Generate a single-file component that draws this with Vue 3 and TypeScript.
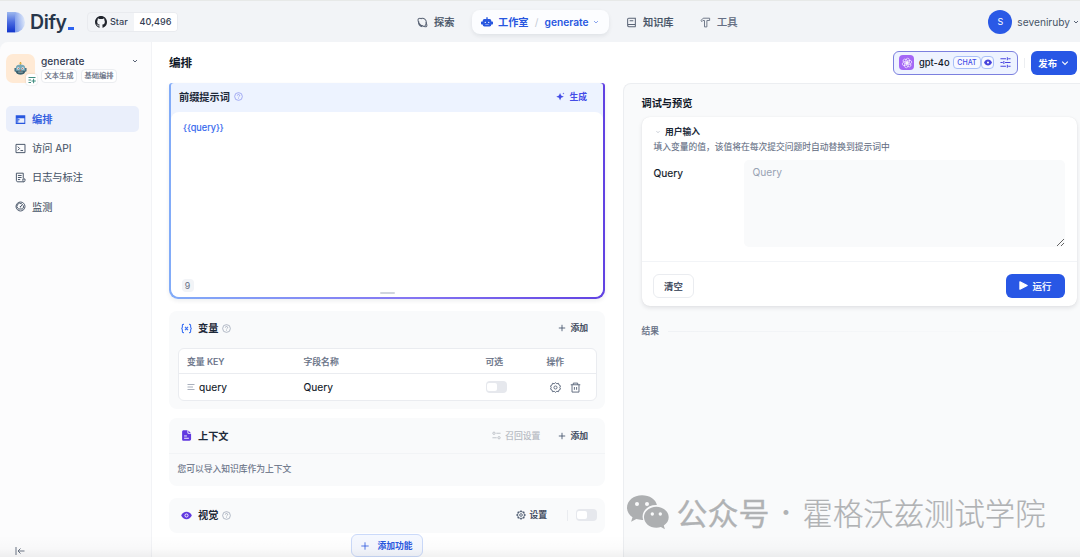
<script setup lang="ts">
import { ref } from 'vue'

interface MenuItem {
  key: string
  label: string
}

const menu: MenuItem[] = [
  { key: 'arrange', label: '编排' },
  { key: 'api', label: '访问 API' },
  { key: 'logs', label: '日志与标注' },
  { key: 'monitor', label: '监测' },
]
const active = ref<string>('arrange')
const prompt = ref<string>('{{query}}')
const query = ref<string>('')
const gearTeeth: number[] = [0, 45, 90, 135, 180, 225, 270, 315]
const petals: number[] = [0, 60, 120, 180, 240, 300]
</script>

<template>
  <div class="page">
    <header class="topbar">
      <div class="brand">
        <svg class="mark" viewBox="0 0 19 21">
          <defs>
            <linearGradient id="markStem" x1="0" y1="0" x2="0" y2="1">
              <stop offset="0" stop-color="#9db8ee" />
              <stop offset="0.5" stop-color="#4a6be0" />
              <stop offset="1" stop-color="#1033cc" />
            </linearGradient>
            <linearGradient id="markBowl" x1="0" y1="0.6" x2="1" y2="0.3">
              <stop offset="0" stop-color="#7d9ceb" />
              <stop offset="1" stop-color="#e2ebfa" />
            </linearGradient>
          </defs>
          <path d="M7.800 0a10.200 10.200 0 0 1 0 20.400z" fill="url(#markBowl)" />
          <path d="M0 0h8v20.400H0z" fill="url(#markStem)" />
        </svg>
        <span class="brand-name">Dify</span><i class="brand-bar"></i>
      </div>
      <div class="github">
        <span class="gh-left">
          <svg class="gh-icon" viewBox="0 0 16 16"><path fill="#20242c" d="M8 0C3.580 0 0 3.580 0 8c0 3.540 2.290 6.530 5.470 7.590.4.070.550-.170.550-.380 0-.190-.010-.820-.010-1.490-2.010.370-2.530-.490-2.690-.940-.090-.230-.480-.940-.820-1.130-.280-.150-.680-.520-.010-.530.630-.010 1.080.580 1.230.820.720 1.210 1.870.870 2.330.660.070-.520.280-.870.510-1.070-1.780-.2-3.640-.890-3.640-3.950 0-.870.310-1.590.820-2.150-.080-.2-.360-1.020.080-2.120 0 0 .670-.210 2.200.820a7.500 7.500 0 0 1 4 0c1.530-1.040 2.200-.820 2.200-.820.440 1.100.160 1.920.080 2.120.510.560.820 1.270.820 2.150 0 3.070-1.870 3.750-3.650 3.950.290.250.540.730.540 1.480 0 1.070-.010 1.930-.010 2.200 0 .210.150.460.550.380A8 8 0 0 0 16 8c0-4.420-3.580-8-8-8z" /></svg>
          Star
        </span>
        <span class="gh-count">40,496</span>
      </div>
      <nav class="nav">
        <a class="nav-item explore">
          <svg viewBox="0 0 12 12" fill="none" stroke="#596375" stroke-width="1.100" stroke-linejoin="round"><path d="M2.500 7.200C1 4.600 1 2.300 1.800 1.700c.8-.6 2.200-.4 3.400.2M9.600 5.600c1.300 2.300 1.500 4 .8 4.700-.7.700-2.800.3-5-1" /><path d="M4.500 1.700A4.300 4.300 0 0 1 10.200 6c0 1.600-.7 2.900-1.800 3.700M2 4.500a4.300 4.300 0 0 0 3.700 6M2.300 6.800c.8 1.300 2 2.400 3.600 3.300" /></svg>
          探索
        </a>
        <a class="nav-pill">
          <svg viewBox="0 0 14 12" fill="#2857df"><path d="M6.200 0h1.600v2H10a2 2 0 0 1 2 2v.8h1.200c.5 0 .8.300.8.700v2c0 .4-.3.700-.8.700H12v.5a2 2 0 0 1-2 2H4a2 2 0 0 1-2-2v-.5H.8c-.5 0-.8-.3-.8-.7v-2c0-.4.3-.7.8-.7H2V4a2 2 0 0 1 2-2h2.200z" /><circle cx="5" cy="5.800" r=".8" fill="#fff" /><circle cx="9" cy="5.800" r=".8" fill="#fff" /><path d="M5 8.300h4" stroke="#fff" stroke-width=".5" /></svg>
          <b>工作室</b><i class="slash">/</i><b class="app-name">generate</b>
          <svg class="chev" viewBox="0 0 8 8" fill="none" stroke="#8ba5ee"><path d="M2 3l2 2 2-2" /></svg>
        </a>
        <a class="nav-item books">
          <svg viewBox="0 0 12 12" fill="none" stroke="#596375" stroke-width="1.100"><path d="M10.200 8.200V1.300H3a1.200 1.200 0 0 0-1.200 1.200v6.900c0 .8.500 1.300 1.200 1.300h7.400M1.800 9.200c0-.6.500-1 1.200-1h7.200v2.500M4 4h4" /></svg>
          知识库
        </a>
        <a class="nav-item tools">
          <svg viewBox="0 0 12 12" fill="none" stroke="#6b7585" stroke-width="1.050" stroke-linejoin="round"><path d="M1 3.900L3.500 1.300h7v2.500h-3v7H4.900v-7H3.200L2.200 5z" /></svg>
          工具
        </a>
      </nav>
      <div class="account">
        <span class="avatar">S</span>
        <span>seveniruby</span>
        <svg class="chev" viewBox="0 0 8 8" fill="none" stroke="#596375" stroke-width="1"><path d="M2 3l2 2 2-2" /></svg>
      </div>
    </header>

    <div class="body">
      <aside class="sidebar">
        <div class="app">
          <div class="app-icon">
            <svg class="robot" viewBox="0 0 14 14">
              <path d="M7 0v3" stroke="#94782d" stroke-width=".9" /><circle cx="7" cy="1.400" r="1.200" fill="#e6b540" />
              <path d="M.5 6.500h2v4h-1a1 1 0 0 1-1-1zM13.500 6.500h-2v4h1a1 1 0 0 0 1-1z" fill="#416c80" />
              <path d="M2 6.300C2 4 4 2.800 7 2.800s5 1.200 5 3.500v4C12 12.600 10 13.500 7 13.500s-5-.9-5-3.200z" fill="#78a8b7" />
              <path d="M2 9.500h10c0 3-2 4-5 4s-5-1-5-4z" fill="#3d5f6c" />
              <circle cx="4.600" cy="6.900" r="1.300" fill="#e8efed" /><circle cx="9.400" cy="6.900" r="1.300" fill="#e8efed" />
              <circle cx="4.700" cy="7" r=".6" fill="#c14c3e" /><circle cx="9.300" cy="7" r=".6" fill="#c14c3e" />
              <path d="M7 7.800l.8 1.500H6.200z" fill="#c25a4b" /><path d="M4.500 10.900h5" stroke="#b9c9c9" stroke-width=".8" />
            </svg>
            <span class="app-badge">
              <svg viewBox="0 0 8 8" stroke="#2b8173" fill="none" stroke-width=".9"><path d="M.5 1.500h7M.5 4h2.500M.5 6.500h2.500M5.600 2.800v4.400M3.500 5h4.300" /></svg>
            </span>
          </div>
          <div class="app-info">
            <div class="app-title">generate</div>
            <div class="tags"><span>文本生成</span><span>基础编排</span></div>
          </div>
          <svg class="chev app-chev" viewBox="0 0 8 8" fill="none" stroke="#596375"><path d="M2 3l2 2 2-2" /></svg>
        </div>
        <div class="menu">
          <a v-for="m in menu" :key="m.key" :class="{ on: active === m.key }" @click="active = m.key">
            <svg viewBox="0 0 12 12" fill="none" stroke="currentColor" stroke-width="1.050">
              <template v-if="m.key === 'arrange'"><path fill="currentColor" stroke="none" fill-rule="evenodd" d="M.8 1.300h10.400v9.500H.8zM2 4.600v5h8.200v-5z" /><path d="M3 4.500v5M3 6.300h2" /></template>
              <template v-else-if="m.key === 'api'"><path d="M1.100 1.500h9.800v9H1.100zM3 4l2 2-2 2M6 8.200h2.800" /></template>
              <template v-else-if="m.key === 'logs'"><path d="M9 7V1.300H1.500v7.800c0 1 .6 1.600 1.500 1.600h6.400a1.500 1.500 0 0 0 1.500-1.500V7.600H8.600v1.600c0 .8.200 1.500.8 1.500M3.200 3.800h4M3.200 6h4M3.200 8.200h2.500" /></template>
              <template v-else><circle cx="6" cy="6" r="4.900" /><path d="M3.300 8.200A3.200 3.200 0 0 1 7.500 3.200M8.900 4.700a3.200 3.200 0 0 1-.2 3.500M8.500 3.500L6 6.200" /><path d="M3.300 8.700h5.400" /><circle cx="6" cy="6.300" r=".8" fill="currentColor" stroke="none" /></template>
            </svg>
            {{ m.label }}
          </a>
        </div>
        <svg class="collapse" viewBox="0 0 10 10" fill="none" stroke="#6b7585"><path d="M1 1v8M3 5h6.500M5.500 2.500L3 5l2.500 2.500" /></svg>
      </aside>

      <main class="main">
        <div class="main-head">
          <h1>编排</h1>
          <div class="actions">
            <div class="model">
              <span class="model-icon">
                <svg viewBox="0 0 12 12" fill="none" stroke="#fff" stroke-width=".6"><ellipse v-for="a in petals" :key="a" cx="6.700" cy="3.900" rx="1.900" ry="2.700" :transform="`rotate(${a} 6 6)`" /></svg>
              </span>
              <b>gpt-4o</b>
              <span class="chat">CHAT</span>
              <span class="vision-tag"><svg viewBox="0 0 10 8"><path d="M0 4c2-5 8-5 10 0-2 5-8 5-10 0z" fill="#4743db" /><circle cx="5" cy="4" r="1.300" fill="#fff" /></svg></span>
              <svg class="sliders" viewBox="0 0 12 12" fill="none" stroke="#4945df" stroke-width="1.100"><path d="M.5 2h6M9 2h2.500M8 .4v3.200M.5 6H3M5.500 6h6M4.200 4.300v3.400M.5 10h6M9 10h2.500M8 8.400v3.200" /></svg>
            </div>
            <i class="sep"></i>
            <button class="publish">发布<svg class="chev" viewBox="0 0 8 8" fill="none" stroke="#fff" stroke-width="1.100"><path d="M1.200 2.700L4 5.400l2.800-2.700" /></svg></button>
          </div>
        </div>

        <div class="columns">
          <section class="left">
            <div class="prompt">
              <div class="prompt-inner">
                <div class="prompt-head">
                  <b>前缀提示词</b>
                  <svg class="help" viewBox="0 0 10 10" fill="none" stroke="#939cf0" stroke-width=".9"><circle cx="5" cy="5" r="4.300" /><path d="M3.700 4a1.300 1.300 0 1 1 1.900 1.100c-.4.200-.6.400-.6.900M5 7v.7" /></svg>
                  <span class="gen"><svg viewBox="0 0 10 10" fill="#444ce7"><path d="M4.500 1l1.200 3 3 1.300-3 1.200-1.200 3-1.200-3-3-1.200 3-1.300zM8.200.5l.3.900.9.300-.9.300-.3.900-.3-.9-.9-.3.900-.3z" /></svg>生成</span>
                </div>
                <div class="editor">
                  <span class="var">{{ prompt }}</span>
                  <span class="count">{{ prompt.length }}</span>
                  <i class="grip"></i>
                </div>
              </div>
            </div>

            <div class="card variables">
              <div class="card-head">
                <svg class="head-icon" viewBox="0 0 12 12" fill="none" stroke="#3970f4" stroke-width="1.200"><path d="M3.200 1.500h-.6c-.8 0-1.100.5-1.100 1.200v1.800L.8 6l.7 1.500v1.800c0 .7.300 1.200 1.100 1.200h.6M8.800 1.500h.6c.8 0 1.100.5 1.100 1.200v1.800l.7 1.500-.7 1.500v1.800c0 .7-.3 1.200-1.100 1.200h-.6M4.300 4.300l3.400 3.400M7.700 4.300L4.300 7.700" /></svg>
                <b>变量</b>
                <svg class="help" viewBox="0 0 10 10" fill="none" stroke="#98a2b3" stroke-width=".8"><circle cx="5" cy="5" r="4.300" /><path d="M3.700 4a1.300 1.300 0 1 1 1.900 1.100c-.4.200-.6.400-.6.900M5 7v.7" /></svg>
                <span class="add"><svg viewBox="0 0 8 8" fill="none" stroke="#46546a" stroke-width=".85"><path d="M4 .8v6.400M.8 4h6.400" /></svg>添加</span>
              </div>
              <div class="table">
                <div class="row th"><span>变量 KEY</span><span>字段名称</span><span>可选</span><span>操作</span></div>
                <div class="row td">
                  <span class="key"><svg viewBox="0 0 8 8" stroke="#a9b0bd" stroke-width="1"><path d="M.5 1.500h7M.5 4H6M.5 6.500h7" /></svg>query</span>
                  <span>Query</span>
                  <span><i class="switch"></i></span>
                  <span class="ops">
                    <svg viewBox="0 0 12 12" fill="none" stroke="#596579" stroke-width="1"><path stroke-linejoin="round" d="M6 .7l1.400 1.200 1.900-.5.500 1.900 1.700.9L10.700 6l.8 1.800-1.700.9-.5 1.900-1.900-.5L6 11.300l-1.400-1.200-1.900.5-.5-1.900-1.700-.9L1.300 6 .5 4.200l1.700-.9.500-1.900 1.900.5z" /><circle cx="6" cy="6" r="1.700" /></svg>
                    <svg viewBox="0 0 12 12" fill="none" stroke="#596579" stroke-width="1"><path d="M.8 3h10.400M3.600 3V1.200h4.800V3M2.200 3v8h7.600V3M4.800 5.500v3M7.200 5.500v3" /></svg>
                  </span>
                </div>
              </div>
            </div>

            <div class="card context">
              <div class="card-head">
                <svg class="head-icon" viewBox="0 0 12 12"><path fill="#6139e0" d="M3 .3h4v2.500c0 .9.500 1.400 1.400 1.400H11v5.700c0 1.200-.7 1.900-1.800 1.900H3C1.800 11.800 1.200 11 1.200 10V2C1.200 1 1.900.3 3 .3zM8 .5l2.700 2.700H8.500A.5.500 0 0 1 8 2.700z" /><path d="M3.400 6.500h3M3.400 9h5.200" stroke="#fff" stroke-width="1" /></svg>
                <b>上下文</b>
                <span class="recall"><svg viewBox="0 0 10 10" fill="none" stroke="#b9bdc4" stroke-width="1"><circle cx="2.200" cy="2.500" r="1.300" /><path d="M4.800 2.500h4.700M.5 7.500h4.700" /><circle cx="7.800" cy="7.500" r="1.300" /></svg>召回设置</span>
                <span class="add"><svg viewBox="0 0 8 8" fill="none" stroke="#46546a" stroke-width=".85"><path d="M4 .8v6.400M.8 4h6.400" /></svg>添加</span>
              </div>
              <div class="context-text">您可以导入知识库作为上下文</div>
            </div>

            <div class="card vision">
              <div class="card-head">
                <svg class="head-icon" viewBox="0 0 12 12"><path d="M.2 6C2.500.7 9.500.7 11.800 6 9.500 11.300 2.500 11.300.2 6z" fill="#6139e0" /><circle cx="6" cy="6" r="1.700" fill="none" stroke="#fff" /></svg>
                <b>视觉</b>
                <svg class="help" viewBox="0 0 10 10" fill="none" stroke="#98a2b3" stroke-width=".8"><circle cx="5" cy="5" r="4.300" /><path d="M3.700 4a1.300 1.300 0 1 1 1.900 1.100c-.4.200-.6.400-.6.900M5 7v.7" /></svg>
                <span class="settings">
                  <svg viewBox="0 0 12 12" fill="none" stroke="#46546a"><circle cx="6" cy="6" r="4.200" /><circle cx="6" cy="6" r="1.600" /><path v-for="a in gearTeeth" :key="a" d="M6 .5v1.500" stroke-width="1.700" :transform="`rotate(${a} 6 6)`" /></svg>设置
                </span>
                <i class="bar"></i>
                <i class="switch"></i>
              </div>
            </div>
            <button class="add-feature"><svg viewBox="0 0 8 8" fill="none" stroke="#2857df" stroke-width=".8"><path d="M4 .3v7.400M.3 4h7.400" /></svg>添加功能</button>
          </section>

          <section class="right">
            <h2>调试与预览</h2>
            <div class="debug">
              <div class="inputs">
                <div class="input-title"><svg class="chev" viewBox="0 0 8 8" fill="none" stroke="#c5cad3"><path d="M2.500 3.200L4 4.700l1.500-1.500" /></svg>用户输入</div>
                <p>填入变量的值，该值将在每次提交问题时自动替换到提示词中</p>
                <div class="field"><label>Query</label><textarea v-model="query" placeholder="Query"></textarea></div>
              </div>
              <div class="buttons">
                <button class="clear">清空</button>
                <button class="run"><svg viewBox="0 0 8 8" fill="#fff" stroke="#fff" stroke-linejoin="round"><path d="M.8.7l6.500 3.300-6.500 3.300z" /></svg>运行</button>
              </div>
            </div>
            <div class="result">结果<i></i></div>
          </section>
        </div>
      </main>
    </div>

    <div class="shade"></div>
    <div class="watermark">
      <svg viewBox="0 0 42 35"><path fill="#adafb1" d="M15 .3C6.600.3 0 5.800 0 12.700c0 4 2.200 7.300 5.500 9.600l-1.400 4.500 5.200-2.700c1.700.5 3.500.8 5.700.8h1.200c-.4-1.200-.6-2.200-.6-3.400 0-6.400 6-11.400 13.300-11.400h1C28.800 4.300 22.600.3 15 .3z" /><path fill="#adafb1" d="M41.700 22.200c0-5.800-5.700-10.500-12.300-10.500-6.900 0-12.400 4.700-12.400 10.500s5.500 10.500 12.400 10.500c1.600 0 3.100-.3 4.500-.7l4 2.200-1.100-3.700c3-2 4.900-5 4.900-8.300z" /><g fill="#f9fafb"><circle cx="10" cy="9" r="2" /><circle cx="20" cy="9" r="2" /><circle cx="25.300" cy="19" r="1.700" /><circle cx="33.300" cy="19" r="1.700" /></g></svg>
      <span class="wm-kind">公众号</span><span class="wm-dot">·</span><span class="wm-name">霍格沃兹测试学院</span>
    </div>
  </div>
</template>

<style>
html,
body {
  margin: 0;
  overflow: hidden;
}
</style>

<style scoped>
* {
  box-sizing: border-box;
}
.page {
  position: relative;
  width: 1080px;
  height: 557px;
  overflow: hidden;
  display: flex;
  flex-direction: column;
  background: #f2f4f7;
  color: #1d2939;
  font-family: Inter, 'Noto Sans CJK SC', sans-serif;
  font-size: 10.200px;
  line-height: 14px;
}
svg {
  flex: none;
  display: block;
}
i {
  font-style: normal;
}
b,
h1,
h2 {
  font-weight: 600;
}
button {
  font-family: inherit;
  border: 0;
  padding: 0;
  display: flex;
  align-items: center;
  justify-content: center;
  white-space: nowrap;
}
.chev {
  width: 8px;
  height: 8px;
}
.topbar {
  flex: none;
  height: 42px;
  display: flex;
  align-items: center;
  padding: 1px 0 0 7px;
  border-top: 1px solid #e7e9e8;
  white-space: nowrap;
}
.brand {
  width: 80px;
  display: flex;
  align-items: center;
}
.mark {
  width: 19px;
  height: 21px;
}
.brand-name {
  margin-left: 4px;
  font-size: 19.500px;
  line-height: 22px;
  font-weight: 600;
  letter-spacing: -0.4px;
  color: #27364b;
}
.brand-bar {
  width: 6px;
  height: 3px;
  margin: 13px 0 0 1px;
  background: #2c62f0;
}
.github {
  display: flex;
  width: 91px;
  height: 20px;
  border: 1px solid #e9ebef;
  border-radius: 4px;
  overflow: hidden;
  font-size: 9.100px;
  font-weight: 500;
  color: #344054;
}
.gh-left {
  width: 46px;
  padding-left: 7px;
  display: flex;
  align-items: center;
  gap: 3px;
}
.gh-icon {
  width: 12px;
  height: 12px;
}
.gh-count {
  flex: 1;
  display: flex;
  align-items: center;
  justify-content: center;
  background: #fff;
}
.nav {
  display: flex;
  align-items: center;
  margin-left: 239px;
}
.nav-item {
  display: flex;
  align-items: center;
  font-weight: 500;
  color: #475467;
  -webkit-text-stroke: 0.2px;
}
.nav-item svg {
  width: 11px;
  height: 11px;
}
.explore {
  width: 55px;
  gap: 6px;
}
.nav-pill {
  width: 137px;
  height: 24px;
  border-radius: 8px;
  background: #fcfdff;
  box-shadow: 0 2px 4px rgba(16, 24, 40, 0.08);
  display: flex;
  align-items: center;
  padding-left: 9px;
  color: #2857df;
}
.nav-pill svg:first-child {
  width: 12px;
  height: 11px;
  margin-right: 5px;
}
.slash {
  width: 16px;
  text-align: center;
  color: #c4cad5;
}
.nav-pill .chev {
  margin-left: 3px;
}
.books {
  width: 74px;
  margin-left: 17px;
  gap: 6px;
}
.tools {
  gap: 6px;
  color: #667085;
}
.account {
  margin-left: auto;
  display: flex;
  align-items: center;
  color: #475467;
}
.avatar {
  width: 24px;
  height: 24px;
  margin-right: 5px;
  border-radius: 50%;
  background: #2a59e6;
  color: #fff;
  display: flex;
  align-items: center;
  justify-content: center;
  font-size: 9px;
}
.account .chev {
  margin-left: 2px;
}
.body {
  flex: 1;
  min-height: 0;
  display: flex;
}
.sidebar {
  flex: none;
  width: 152px;
  display: flex;
  flex-direction: column;
  background: #fcfcfd;
  border-right: 1px solid #f2f3f6;
  border-radius: 8px 0 0 0;
}
.app {
  display: flex;
  height: 64px;
  padding: 12px 0 0 6px;
}
.app-icon {
  position: relative;
  width: 29px;
  height: 29px;
  border-radius: 7px;
  background: #ffead5;
  display: flex;
  align-items: center;
  justify-content: center;
}
.robot {
  width: 13px;
  height: 13px;
}
.app-badge {
  position: absolute;
  right: -2px;
  bottom: -2px;
  width: 11px;
  height: 11px;
  border-radius: 3px;
  background: #fff;
  box-shadow: 0 0 2px rgba(16, 24, 40, 0.16);
  display: flex;
  align-items: center;
  justify-content: center;
}
.app-badge svg {
  width: 8px;
  height: 8px;
}
.app-info {
  width: 91px;
  margin-left: 6px;
}
.app-title {
  font-weight: 500;
  font-size: 10.200px;
  line-height: 15px;
  color: #344054;
}
.tags {
  display: flex;
  gap: 4px;
}
.tags span {
  width: 36px;
  height: 14px;
  border: 1px solid #ebedf0;
  border-radius: 4px;
  background: #fff;
  color: #5a6578;
  font-size: 7.250px;
  line-height: 12px;
  text-align: center;
  white-space: nowrap;
  -webkit-text-stroke: 0.15px;
}
.app-chev {
  margin: 3px 0 0 -1px;
}
.menu {
  display: flex;
  flex-direction: column;
  gap: 3.200px;
  padding: 0 12px 0 6px;
}
.menu a {
  height: 26px;
  display: flex;
  align-items: center;
  gap: 6px;
  padding-left: 9px;
  border-radius: 5px;
  color: #475467;
  -webkit-text-stroke: 0.1px;
}
.menu a svg {
  width: 11px;
  height: 11px;
}
.menu a.on {
  background: #eaeffb;
  color: #2857df;
  font-weight: 500;
  -webkit-text-stroke: 0.15px;
}
.collapse {
  width: 10px;
  height: 10px;
  margin: auto 0 1px 15px;
}
.main {
  flex: 1;
  min-width: 0;
  display: flex;
  flex-direction: column;
  background: #fff;
}
.main-head {
  flex: none;
  height: 41px;
  display: flex;
  justify-content: space-between;
  align-items: center;
  padding: 0 3px 0 17px;
}
h1 {
  margin: 0;
  font-size: 11.600px;
  color: #101828;
}
.actions {
  display: flex;
  align-items: center;
}
.model {
  width: 125px;
  height: 24px;
  border: 1px solid #7c80df;
  border-radius: 6px;
  background: #eef3ff;
  display: flex;
  align-items: center;
  padding-left: 5px;
  font-size: 9.300px;
}
.model-icon {
  width: 15px;
  height: 15px;
  border-radius: 4px;
  background: #a467f6;
  display: flex;
  align-items: center;
  justify-content: center;
}
.model-icon svg {
  width: 12px;
  height: 12px;
}
.model b {
  width: 31px;
  margin-left: 5px;
  font-weight: 500;
  color: #101828;
}
.chat,
.vision-tag {
  height: 13px;
  border: 1px solid #a9bff8;
  border-radius: 4px;
  background: #f7f9ff;
  display: flex;
  align-items: center;
  justify-content: center;
}
.chat {
  width: 28px;
  margin-left: 3px;
  color: #444ce7;
  font-size: 7px;
  font-weight: 500;
}
.vision-tag {
  width: 13px;
}
.vision-tag svg {
  width: 8px;
  height: 7px;
}
.sliders {
  width: 11px;
  height: 11px;
  margin-left: 6px;
}
.sep {
  width: 1px;
  height: 10px;
  margin: 0 5.500px 0 6px;
  background: #eceef1;
}
.publish {
  width: 46.500px;
  height: 24px;
  gap: 4px;
  border-radius: 6px;
  background: #2857e5;
  color: #fff;
  font-size: 9.400px;
  font-weight: 600;
}
.columns {
  flex: 1;
  min-height: 0;
  display: flex;
  justify-content: space-between;
}
.left {
  width: 436px;
  margin-left: 17px;
  display: flex;
  flex-direction: column;
}
.prompt {
  flex: none;
  height: 216px;
  padding: 0 2px 2px;
  border-radius: 3px 3px 9px 9px;
  background: linear-gradient(90deg, #82acf8, #8576f3 55%, #6142e2);
  box-shadow: 0 2px 4px rgba(16, 24, 40, 0.07);
}
.prompt-inner {
  height: 214px;
  display: flex;
  flex-direction: column;
  border-radius: 3px 3px 8px 8px;
  background: #edf3ff;
  overflow: hidden;
}
.prompt-head {
  flex: none;
  height: 29px;
  display: flex;
  align-items: center;
  padding: 0 16px 2px 8px;
}
.help {
  width: 9px;
  height: 9px;
  margin-left: 4px;
}
.gen {
  margin-left: auto;
  display: flex;
  align-items: center;
  gap: 4px;
  color: #444ce7;
  font-size: 8.800px;
  font-weight: 600;
}
.gen svg {
  width: 9px;
  height: 9px;
}
.editor {
  position: relative;
  flex: 1;
  border-radius: 8px;
  background: #fff;
  padding: 8px 12px;
}
.var {
  font-size: 9.200px;
  color: #2f63ee;
  -webkit-text-stroke: 0.15px;
}
.count {
  position: absolute;
  left: 10.500px;
  bottom: 5.500px;
  width: 12px;
  height: 13px;
  border-radius: 4px;
  background: #f2f4f7;
  font-size: 8.800px;
  line-height: 13px;
  text-align: center;
  color: #667085;
}
.grip {
  position: absolute;
  left: 209px;
  bottom: 3px;
  width: 15px;
  height: 2px;
  border-radius: 1px;
  background: #d0d5dd;
}
.card {
  flex: none;
  border-radius: 8px;
  background: #f9fafb;
}
.card-head {
  height: 34px;
  display: flex;
  align-items: center;
  padding: 0 17px 0 12px;
}
.head-icon {
  width: 11px;
  height: 11px;
  margin-right: 6px;
}
.variables {
  height: 98px;
  margin-top: 12px;
}
.add {
  margin-left: auto;
  display: flex;
  align-items: center;
  gap: 4px;
  font-size: 8.800px;
  font-weight: 500;
  color: #344054;
  -webkit-text-stroke: 0.15px;
}
.add svg {
  width: 8px;
  height: 8px;
}
.table {
  height: 53px;
  margin: 3px 8px 0 9px;
  border: 1px solid #eaecf0;
  border-radius: 6px;
  background: #fff;
}
.row {
  display: grid;
  grid-template-columns: 116.500px 182px 61px 1fr;
  align-items: center;
  padding-left: 8px;
}
.th {
  height: 25px;
  border-bottom: 1px solid #eaecf0;
  padding-top: 1px;
  color: #667085;
  font-size: 8.800px;
  font-weight: 500;
  -webkit-text-stroke: 0.15px;
}
.td {
  height: 26px;
  color: #101828;
  -webkit-text-stroke: 0.1px;
}
.key {
  display: flex;
  align-items: center;
  gap: 4px;
}
.key svg {
  width: 8px;
  height: 8px;
}
.switch {
  display: block;
  width: 21px;
  height: 12px;
  padding: 2px 1px;
  border-radius: 4px;
  background: #e6e8ed;
}
.switch::before {
  content: '';
  display: block;
  width: 10px;
  height: 8px;
  border-radius: 2px;
  background: #fff;
}
.ops {
  display: flex;
  gap: 9px;
  padding-left: 3px;
}
.ops svg {
  width: 11px;
  height: 11px;
}
.context {
  height: 68px;
  margin-top: 9px;
}
.context .card-head {
  height: 36px;
  border-bottom: 1px solid #f2f4f6;
}
.recall {
  margin-left: auto;
  display: flex;
  align-items: center;
  gap: 4px;
  font-size: 8.800px;
  color: #b5b9c1;
  -webkit-text-stroke: 0.15px;
}
.recall svg {
  width: 9px;
  height: 9px;
}
.recall + .add {
  margin-left: 18px;
}
.context-text {
  padding: 8px 8.500px;
  font-size: 8.750px;
  color: #667085;
  -webkit-text-stroke: 0.1px;
}
.vision {
  height: 35px;
  margin-top: 12px;
}
.vision .card-head {
  height: 34px;
  padding-right: 8px;
}
.settings {
  margin-left: auto;
  display: flex;
  align-items: center;
  gap: 3px;
  font-size: 8.800px;
  font-weight: 500;
  color: #344054;
  -webkit-text-stroke: 0.15px;
}
.settings svg {
  width: 10px;
  height: 10px;
}
.bar {
  width: 1px;
  height: 11px;
  margin: 0 8px 0 20px;
  background: #eaecf0;
}
.add-feature {
  flex: none;
  align-self: center;
  width: 72px;
  height: 23px;
  margin-top: 1px;
  gap: 8px;
  border: 1px solid #cbdafa;
  border-radius: 6px;
  background: #f5f8ff;
  color: #2857df;
  font-size: 8.800px;
  font-weight: 600;
}
.add-feature svg {
  width: 8px;
  height: 8px;
}
.right {
  width: 457px;
  padding: 12px 3px 0 17.500px;
  border-top: 1px solid #eceef1;
  border-left: 1px solid #eceef1;
  border-radius: 8px 0 0 0;
  background: #f9fafb;
}
h2 {
  margin: 0 0 7px;
  font-size: 10.200px;
  line-height: 14px;
  color: #101828;
}
.debug {
  width: 435px;
  height: 189px;
  border-radius: 8px;
  background: #fff;
  box-shadow: 0 0 1px rgba(16, 24, 40, 0.1), 0 2px 4px rgba(16, 24, 40, 0.1);
}
.inputs {
  height: 145px;
  padding: 8px 12px 0;
  border-bottom: 1px solid #f2f4f7;
}
.input-title {
  display: flex;
  align-items: center;
  gap: 3.500px;
  font-size: 8.750px;
  font-weight: 600;
}
p {
  margin: 1px 0 6px;
  font-size: 8.750px;
  line-height: 14px;
  color: #667085;
  -webkit-text-stroke: 0.1px;
}
.field {
  display: flex;
}
label {
  width: 90.500px;
  padding-top: 5.500px;
  color: #101828;
  -webkit-text-stroke: 0.15px;
}
textarea {
  width: 321px;
  height: 87px;
  padding: 5px 8.500px;
  border: 0;
  border-radius: 5px;
  outline: 0;
  background: #f9fafb;
  font: inherit;
  color: #1d2939;
}
textarea::placeholder {
  color: #98a2b3;
}
.buttons {
  display: flex;
  justify-content: space-between;
  padding: 11.500px 12px 0 11.500px;
}
.clear {
  width: 41px;
  height: 24px;
  border: 1px solid #eaecf0;
  border-radius: 6px;
  background: #fff;
  color: #344054;
  font-size: 9.400px;
  font-weight: 500;
  -webkit-text-stroke: 0.15px;
}
.run {
  width: 59px;
  height: 24px;
  gap: 5px;
  border-radius: 6px;
  background: #2857e5;
  color: #fff;
  font-size: 9.400px;
  font-weight: 500;
  -webkit-text-stroke: 0.15px;
}
.run svg {
  width: 9px;
  height: 9px;
}
.result {
  display: flex;
  align-items: center;
  gap: 9px;
  margin-top: 18px;
  font-size: 8.750px;
  font-weight: 500;
  color: #667085;
  -webkit-text-stroke: 0.15px;
}
.result i {
  flex: 1;
  height: 1px;
  background: linear-gradient(90deg, #f0f2f5, #f9fafb);
}
.shade {
  position: absolute;
  left: 0;
  right: 0;
  bottom: 0;
  height: 22px;
  pointer-events: none;
  background: linear-gradient(rgba(0, 0, 0, 0), rgba(0, 0, 0, 0.015) 60%, rgba(0, 0, 0, 0.055));
}
.watermark {
  position: absolute;
  left: 626.500px;
  top: 493px;
  display: flex;
  align-items: center;
  height: 38px;
  color: #b0b2b4;
  white-space: nowrap;
  font-family: 'Noto Sans CJK SC', sans-serif;
  line-height: 38px;
}
.watermark svg {
  width: 42px;
  height: 35px;
}
.wm-kind {
  margin-left: 8px;
  font-size: 31px;
  -webkit-text-stroke: 0.3px #b0b2b4;
}
.wm-dot {
  width: 33px;
  text-align: center;
  font-family: Inter, sans-serif;
  font-size: 31px;
  font-weight: 600;
}
.wm-name {
  font-size: 30.400px;
  font-weight: 300;
  -webkit-text-stroke: 0.2px #b0b2b4;
}
</style>
